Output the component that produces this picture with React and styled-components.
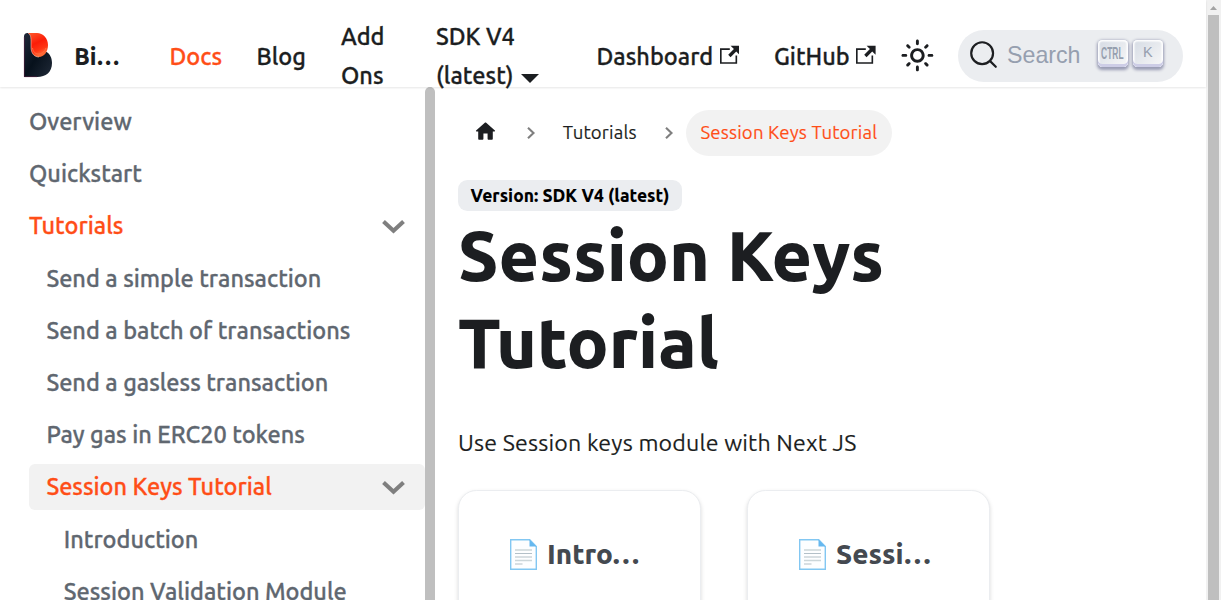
import React from 'react';
import styled, { createGlobalStyle } from 'styled-components';

const Global = createGlobalStyle`
  *, *::before, *::after { box-sizing: border-box; }
  html { font-size: 23.2px; }
  body {
    margin: 0;
    height: 600px;
    overflow: hidden;
    background: #fff;
    color: #1c1e21;
    font: 1rem/1.65 Ubuntu, "Noto Sans", "Open Sans", sans-serif;
    text-rendering: optimizeLegibility;
  }
`;

const Window = styled.div`
  display: flex;
  width: 1221px;
  height: 600px;
  overflow: hidden;
`;

const Page = styled.div`
  display: flex;
  flex-direction: column;
  width: 1206px;
  height: 600px;
`;

const Navbar = styled.header`
  position: relative;
  z-index: 2;
  display: flex;
  flex: none;
  align-items: center;
  height: 87px;
  padding: 24.4px 23.2px 0;
  background: #fff;
  box-shadow: 0 1px 2px 0 rgba(0, 0, 0, 0.1);
`;

const Brand = styled.a`
  display: flex;
  align-items: center;
  width: 97px;
  margin-right: 32px;
  font-weight: 800;
  white-space: nowrap;
  svg { flex: none; margin: -1px 21px 0 0; }
`;

const NavItem = styled.a`
  flex: none;
  width: ${(p) => p.$width}px;
  padding: ${(p) => (p.$stacked ? '6.2px 0 5.8px 17.4px' : '7px 0 5.8px 17.4px')};
  font-size: 23.5px;
  font-weight: 500;
  line-height: 39px;
  letter-spacing: 0.02px;
  -webkit-text-stroke: 0.3px currentColor;
  color: ${(p) => (p.$active ? '#ff4e17' : '#1c1e21')};
  svg { margin-left: 6.5px; vertical-align: 0.5px; }
`;

const Caret = styled.span`
  display: inline-block;
  margin-left: 7px;
  border: 9.28px solid transparent;
  border-top-color: currentColor;
  border-bottom: 0;
  transform: translateY(-1px);
`;

const ThemeToggle = styled.button`
  display: flex;
  align-items: center;
  justify-content: center;
  width: 46px;
  height: 46px;
  margin-top: -1px;
  padding: 0;
  border: 0;
  background: none;
  color: #1c1e21;
`;

const SearchBox = styled.button`
  display: flex;
  align-items: center;
  width: 225px;
  height: 52px;
  margin-left: 18px;
  padding: 0 19.5px 3px 11px;
  border: 0;
  border-radius: 40px;
  background: #ebedf0;
  color: #969faf;
  font: 400 23.2px/28px "Liberation Sans", sans-serif;
  svg { flex: none; margin-top: 1px; }
`;

const SearchLabel = styled.span`
  flex: 1;
  margin: 2px 0 0 9px;
  text-align: left;
`;

const Key = styled.kbd`
  display: flex;
  align-items: center;
  justify-content: center;
  width: 30px;
  height: 27px;
  margin: -1px 0 0 ${(p) => (p.$second ? 5.5 : 0)}px;
  padding: 0 1px ${(p) => (p.$second ? 3 : 1)}px 0;
  border-radius: 4.5px;
  background: linear-gradient(-225deg, #d5dbe4, #f8f8f8);
  box-shadow: inset 0 -3px 0 0 #cdcde6, inset 0 0 1.5px 1.5px #fff, 0 1.5px 3px 1px rgba(30, 35, 90, 0.4);
  color: #969faf;
  font: 400 14.5px/1 "Liberation Sans", sans-serif;
`;

const CtrlText = styled.span`
  display: block;
  transform: scale(0.58, 1.15);
  font-weight: 700;
`;

const Body = styled.div`
  display: flex;
  flex: 1;
  min-height: 0;
`;

const Sidebar = styled.aside`
  display: flex;
  flex: none;
  width: 435px;
`;

const Menu = styled.nav`
  display: flex;
  flex: 1;
  flex-direction: column;
  gap: 6.2px;
  padding: 11.6px 0 0 29px;
  overflow: hidden;
`;

const MenuItem = styled.a`
  display: flex;
  flex: none;
  align-items: center;
  justify-content: space-between;
  height: 46px;
  padding: 0 14px 0.2px ${(p) => p.$depth * 17.4}px;
  border-radius: 5.8px;
  background: ${(p) => (p.$selected ? '#f2f2f2' : 'transparent')};
  color: ${(p) => (p.$active ? '#ff4e17' : '#606770')};
  font-size: 23.5px;
  font-weight: 500;
  line-height: 29px;
  -webkit-text-stroke: 0.3px currentColor;
  white-space: nowrap;
  svg { margin-top: 1px; }
`;

const SidebarScroll = styled.div`
  width: 10px;
  border-radius: 5px 5px 0 0;
  background: #bfbfbf;
`;

const Main = styled.main`
  flex: 1;
  min-width: 0;
  padding: 23px 23px 0;
`;

const Breadcrumbs = styled.nav`
  display: flex;
  align-items: center;
  height: 46px;
  margin-bottom: 24px;
  font-size: 18.56px;
  line-height: 1;
  letter-spacing: 0.17px;
  -webkit-text-stroke: 0.15px currentColor;
`;

const Crumb = styled.a`
  display: flex;
  align-items: center;
  height: 46px;
  padding: 0 14.9px;
  border-radius: 46px;
  background: ${(p) => (p.$active ? '#f2f2f2' : 'transparent')};
  color: ${(p) => (p.$active ? '#ff4e17' : '#1c1e21')};
  white-space: nowrap;
  svg { margin: -3px 0.5px 0; }
`;

const CrumbArrow = styled.svg`
  flex: none;
  margin: 0 11px;
`;

const Badge = styled.span`
  display: flex;
  align-items: center;
  width: 224px;
  height: 31px;
  padding-left: 12.6px;
  border-radius: 9.3px;
  background: #ebedf0;
  color: #000;
  font-size: 17.4px;
  font-weight: 800;
  line-height: 1;
  white-space: nowrap;
`;

const Title = styled.h1`
  width: 520px;
  margin: 1px 0 37px;
  font-size: 69.6px;
  font-weight: 800;
  line-height: 87px;
`;

const Lead = styled.p`
  margin: 0 0 29px;
  letter-spacing: 0.17px;
  -webkit-text-stroke: 0.15px currentColor;
`;

const Cards = styled.div`
  display: flex;
  gap: 46px;
`;

const Card = styled.a`
  display: flex;
  align-items: flex-start;
  width: 243px;
  height: 180px;
  padding: 45px 0 0 50px;
  border: 1px solid #ebedf0;
  border-radius: 18.5px;
  background: #fff;
  box-shadow: 0 2px 4px 0 rgba(0, 0, 0, 0.15);
  color: #444950;
  font-size: 27.84px;
  font-weight: 800;
  line-height: 35px;
  white-space: nowrap;
  svg { flex: none; margin: 3px 10px 0 1px; }
`;

const PageScroll = styled.div`
  display: flex;
  flex-direction: column;
  align-items: center;
  width: 15px;
  height: 600px;
  background: #f1f1f1;
  svg { flex: none; }
`;

const Thumb = styled.div`
  flex: 1;
  width: 11px;
  background: #bfbfbf;
`;

const Logo = () => (
  <svg width="30" height="46" viewBox="0 0 30 46">
    <defs>
      <linearGradient id="flame" x1="0" y1="0" x2="0.4" y2="1">
        <stop offset="0" stopColor="#ff5a2c" />
        <stop offset="0.5" stopColor="#fb1d08" />
        <stop offset="0.8" stopColor="#ff3614" />
        <stop offset="1" stopColor="#ff6a35" />
      </linearGradient>
      <linearGradient id="body" x1="0" y1="0" x2="1" y2="1">
        <stop offset="0" stopColor="#20283a" />
        <stop offset="0.5" stopColor="#07111c" />
        <stop offset="1" stopColor="#202a38" />
      </linearGradient>
    </defs>
    <path d="M1 4.5Q1 1 4.5 1H9L12 18L23.5 20C27 22 29 26 29 31C29 40 23 45 14 45H1Z" fill="url(#body)" />
    <path d="M5 1H14C20 1 25 6 25 13C25 20 21 25 16 25C11 25 8 21 8 15V9C8 4 7 2 5 1Z" fill="url(#flame)" />
    <path d="M9.5 16C10.5 24 20 24 23 16" fill="none" stroke="#ff7145" strokeWidth="0.9" />
    <path d="M5 1.2C7 2.2 8 4 8 9V15C8 21 11 25 16 25" fill="none" stroke="#ffc9b5" strokeWidth="0.6" />
    <path d="M1.3 5V44.7H14" fill="none" stroke="#6b2049" strokeWidth="0.5" />
  </svg>
);

const External = () => (
  <svg width="19.6" height="19.6" viewBox="0 0 24 24" fill="currentColor" stroke="none">
    <path d="M21 13v10h-21v-19h12v2h-10v15h17v-8h2zm3-12h-10.988l4.035 4-6.977 7.07 2.828 2.828 6.977-7.07 4.125 4.172v-11z" />
  </svg>
);

const Sun = () => (
  <svg width="34.8" height="34.8" viewBox="0 0 24 24" fill="currentColor">
    <path d="M12,9c1.65,0,3,1.35,3,3s-1.35,3-3,3s-3-1.35-3-3S10.35,9,12,9 M12,7c-2.76,0-5,2.24-5,5s2.24,5,5,5s5-2.24,5-5 S14.76,7,12,7L12,7z M2,13l2,0c0.55,0,1-0.45,1-1s-0.45-1-1-1l-2,0c-0.55,0-1,0.45-1,1S1.45,13,2,13z M20,13l2,0c0.55,0,1-0.45,1-1 s-0.45-1-1-1l-2,0c-0.55,0-1,0.45-1,1S19.45,13,20,13z M11,2v2c0,0.55,0.45,1,1,1s1-0.45,1-1V2c0-0.55-0.45-1-1-1S11,1.45,11,2z M11,20v2c0,0.55,0.45,1,1,1s1-0.45,1-1v-2c0-0.55-0.45-1-1-1C11.45,19,11,19.45,11,20z M5.99,4.58c-0.39-0.39-1.03-0.39-1.41,0 c-0.39,0.39-0.39,1.03,0,1.41l1.06,1.06c0.39,0.39,1.03,0.39,1.41,0s0.39-1.03,0-1.41L5.99,4.58z M18.36,16.95 c-0.39-0.39-1.03-0.39-1.41,0c-0.39,0.39-0.39,1.03,0,1.41l1.06,1.06c0.39,0.39,1.03,0.39,1.41,0c0.39-0.39,0.39-1.03,0-1.41 L18.36,16.95z M19.42,5.99c0.39-0.39,0.39-1.03,0-1.41c-0.39-0.39-1.03-0.39-1.41,0l-1.06,1.06c-0.39,0.39-0.39,1.03,0,1.41 s1.03,0.39,1.41,0L19.42,5.99z M7.05,18.36c0.39-0.39,0.39-1.03,0-1.41c-0.39-0.39-1.03-0.39-1.41,0l-1.06,1.06 c-0.39,0.39-0.39,1.03,0,1.41s1.03,0.39,1.41,0L7.05,18.36z" />
  </svg>
);

const SearchIcon = () => (
  <svg width="29" height="29" viewBox="0 0 20 20">
    <path d="M14.386 14.386l4.0877 4.0877-4.0877-4.0877c-2.9418 2.9419-7.7115 2.9419-10.6533 0-2.9419-2.9418-2.9419-7.7115 0-10.6533 2.9418-2.9419 7.7115-2.9419 10.6533 0 2.9419 2.9418 2.9419 7.7115 0 10.6533z" stroke="#1c1e21" strokeWidth="1.5" fill="none" strokeLinecap="round" strokeLinejoin="round" />
  </svg>
);

const Chevron = () => (
  <svg width="35" height="29" viewBox="0 0 35 29" fill="none">
    <path d="M7.5 9.5L17.5 18.8L27.5 9.5" stroke="#7f7f7f" strokeWidth="4.1" />
  </svg>
);

const Home = () => (
  <svg width="25" height="25" viewBox="0 0 24 24" fill="currentColor" stroke="none">
    <path d="M10 19v-5h4v5c0 .55.45 1 1 1h3c.55 0 1-.45 1-1v-7h1.7c.46 0 .68-.57.33-.87L12.67 3.6c-.38-.34-.96-.34-1.34 0l-8.36 7.53c-.34.3-.13.87.33.87H5v7c0 .55.45 1 1 1h3c.55 0 1-.45 1-1z" />
  </svg>
);

const Arrow = () => (
  <CrumbArrow width="12" height="14" viewBox="0 0 12 14" fill="none">
    <path d="M3 1.7L8.5 7L3 12.3" stroke="#7f7f7f" strokeWidth="2.1" />
  </CrumbArrow>
);

const Doc = () => (
  <svg width="27" height="31" viewBox="0 0 27 31" fill="none">
    <path d="M0.7 0.7H19.7L26.3 7.5V30.3H0.7Z" fill="#fdfeff" stroke="#82c7f2" strokeWidth="1.4" />
    <path d="M19.5 0.5V7.5H26.5Z" fill="#66b8ef" />
    <path d="M5 11H22M5 21.5H22" stroke="#ccd6d9" strokeWidth="1.5" />
    <path d="M5 14.5H22M5 18H22M5 25H12.5" stroke="#b3c0c8" strokeWidth="1.2" />
  </svg>
);

const menu = [
  { label: 'Overview', depth: 0 },
  { label: 'Quickstart', depth: 0 },
  { label: 'Tutorials', depth: 0, active: true },
  { label: 'Send a simple transaction', depth: 1 },
  { label: 'Send a batch of transactions', depth: 1 },
  { label: 'Send a gasless transaction', depth: 1 },
  { label: 'Pay gas in ERC20 tokens', depth: 1 },
  { label: 'Session Keys Tutorial', depth: 1, active: true, selected: true },
  { label: 'Introduction', depth: 2 },
  { label: 'Session Validation Module', depth: 2 },
];

export default function App() {
  return (
    <Window>
      <Global />
      <Page>
        <Navbar>
          <Brand><Logo />Bi…</Brand>
          <NavItem $width={87} $active>Docs</NavItem>
          <NavItem $width={84.5}>Blog</NavItem>
          <NavItem $width={95} $stacked>Add<br />Ons</NavItem>
          <NavItem $width={160.5} $stacked>SDK V4<br />(latest)<Caret /></NavItem>
          <NavItem $width={177.5}>Dashboard<External /></NavItem>
          <NavItem $width={137.5}>GitHub<External /></NavItem>
          <ThemeToggle><Sun /></ThemeToggle>
          <SearchBox>
            <SearchIcon />
            <SearchLabel>Search</SearchLabel>
            <Key><CtrlText>CTRL</CtrlText></Key>
            <Key $second>K</Key>
          </SearchBox>
        </Navbar>
        <Body>
          <Sidebar>
            <Menu>
              {menu.map((m) => (
                <MenuItem key={m.label} $depth={m.depth} $active={m.active} $selected={m.selected}>
                  {m.label}
                  {m.active && <Chevron />}
                </MenuItem>
              ))}
            </Menu>
            <SidebarScroll />
          </Sidebar>
          <Main>
            <Breadcrumbs>
              <Crumb><Home /></Crumb>
              <Arrow />
              <Crumb>Tutorials</Crumb>
              <Arrow />
              <Crumb $active>Session Keys Tutorial</Crumb>
            </Breadcrumbs>
            <Badge>Version: SDK V4 (latest)</Badge>
            <Title>Session Keys Tutorial</Title>
            <Lead>Use Session keys module with Next JS</Lead>
            <Cards>
              <Card><Doc />Intro…</Card>
              <Card><Doc />Sessi…</Card>
            </Cards>
          </Main>
        </Body>
      </Page>
      <PageScroll>
        <svg width="15" height="15" viewBox="0 0 15 15"><path d="M4 10L7.5 6L11 10Z" fill="#a3a3a3" /></svg>
        <Thumb />
      </PageScroll>
    </Window>
  );
}
